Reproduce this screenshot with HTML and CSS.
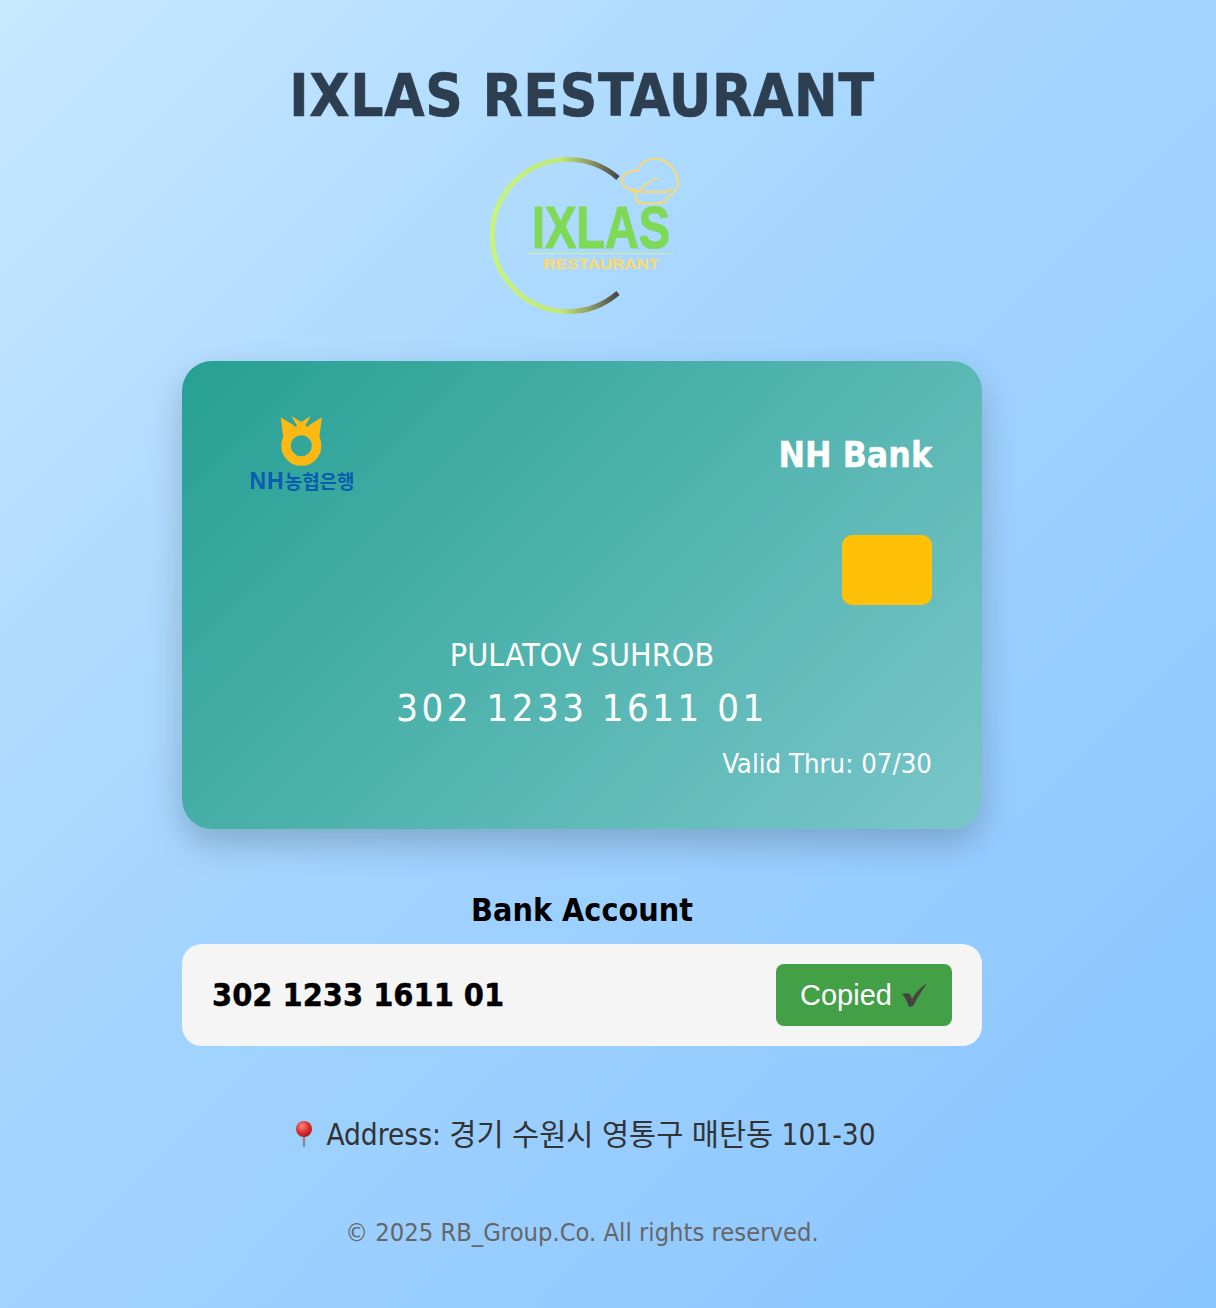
FILE: index.html
```html
<!DOCTYPE html>
<html lang="en">
<head>
    <meta charset="UTF-8">
    <title>IXLAS RESTAURANT</title>
    <link rel="stylesheet" href="styles.css">
</head>
<body>
<div class="page">
    <h1 class="title">IXLAS RESTAURANT</h1>
    <svg class="logo" width="224" height="170" viewBox="0 0 224 170">
        <defs>
            <linearGradient id="ring" gradientUnits="userSpaceOnUse" x1="4" y1="0" x2="130" y2="0">
                <stop offset="0" stop-color="#c6f47c"/>
                <stop offset="0.55" stop-color="#bfe878"/>
                <stop offset="0.78" stop-color="#8e9a62"/>
                <stop offset="1" stop-color="#454545"/>
            </linearGradient>
        </defs>
        <path d="M130 26 A76 76 0 1 0 130 141" fill="none" stroke="url(#ring)" stroke-width="5"/>
        <g fill="none" stroke="#ffd964" stroke-width="1.8" stroke-linejoin="round">
            <path d="M147 40 C136 36 132 30 134 27 C136 21 142 18 149 19 C152 10 162 6 168 7 C178 7 188 16 190 28 C191 35 187 41 182 43 L177 50 C168 52 158 52 149 50 Z"/>
            <path d="M144 36 C148 39 151 40 155 40 L178 40 C180 40 182 38 184 36"/>
            <path d="M152 38 C157 32 163 28 170 26"/>
        </g>
        <text class="logo-name" x="113" y="96" text-anchor="middle" textLength="138" lengthAdjust="spacingAndGlyphs">IXLAS</text>
        <rect x="39" y="101" width="146" height="1" fill="#d5ec9a"/>
        <text class="logo-sub" x="113" y="117" text-anchor="middle" textLength="116" lengthAdjust="spacingAndGlyphs">RESTAURANT</text>
    </svg>

    <div class="card">
        <div class="card-top">
            <div class="bank-logo">
                <svg width="46" height="50" viewBox="0 0 46 50">
                    <path d="M12.3 0 L22.3 6 L31.7 0 L22.3 17 Z" fill="#fdb913"/>
                    <path d="M1.7 1.3 L15 9.5 L18 18 L5 25.7 L3.3 14 Z M42.9 1.3 L29.6 9.5 L26.6 18 L39.6 25.7 L41.3 14 Z" fill="#fdb913"/>
                    <circle cx="22.3" cy="29.7" r="15.3" fill="none" stroke="#fdb913" stroke-width="9.5"/>
                </svg>
                <div class="bank-logo-text"><b>NH</b>농협은행</div>
            </div>
            <div class="bank-name">NH Bank</div>
        </div>
        <div class="chip"></div>
        <div class="holder">PULATOV SUHROB</div>
        <div class="number">302 1233 1611 01</div>
        <div class="valid">Valid Thru: 07/30</div>
    </div>

    <div class="account-label">Bank Account</div>
    <div class="account-box">
        <span class="account-no">302 1233 1611 01</span>
        <button class="copy-btn">Copied
            <svg class="check" width="26" height="24" viewBox="0 0 26 24">
                <path d="M0 11 C3 10 6 10 8 11 L10 16 C13 10 18 5 25 0 C20 8 15 15 11 23 L7 24 C5 18 3 14 0 11 Z" fill="#444"/>
            </svg>
        </button>
    </div>

    <p class="address">
        <svg class="pin" width="24" height="30" viewBox="0 0 24 30">
            <defs>
                <radialGradient id="pinHead" cx="0.38" cy="0.32" r="0.7">
                    <stop offset="0" stop-color="#ff8a80"/>
                    <stop offset="0.5" stop-color="#e53935"/>
                    <stop offset="1" stop-color="#a81818"/>
                </radialGradient>
            </defs>
            <rect x="10.8" y="14" width="2.4" height="13" rx="1" fill="#8d8d88"/>
            <circle cx="12" cy="9" r="8" fill="url(#pinHead)"/>
        </svg>
        Address: 경기 수원시 영통구 매탄동 101-30
    </p>
    <p class="footer">© 2025 RB_Group.Co. All rights reserved.</p>
</div>
</body>
</html>
```

FILE: styles.css
```css
html,
body {
    margin: 0;
    padding: 0;
    height: 100%;
}

body {
    background: linear-gradient(135deg, #c8e8ff 0%, #a6d6ff 40%, #88c4ff 100%);
    font-family: "DejaVu Sans Condensed", "DejaVu Sans", "Noto Sans CJK KR", sans-serif;
    overflow: hidden;
}

.page {
    width: 1164px;
    display: flex;
    flex-direction: column;
    align-items: center;
}

.title {
    margin: 63px 0 0;
    font-size: 58px;
    line-height: 66px;
    font-weight: 700;
    letter-spacing: 0.7px;
    -webkit-text-stroke: 0.6px #2c3e50;
    color: #2c3e50;
}

.logo {
    display: block;
    margin: 23px 0 0 36px;
}

.card {
    box-sizing: border-box;
    width: 800px;
    height: 468px;
    margin-top: 39px;
    padding: 50px 50px 0;
    border-radius: 30px;
    background: linear-gradient(135deg, #26a092, #7ac6ca);
    box-shadow: 0 15px 35px rgba(0, 0, 0, 0.2);
    color: #fff;
    display: flex;
    flex-direction: column;
}

.card-top {
    display: flex;
    justify-content: space-between;
    align-items: center;
}

.bank-logo {
    width: 130px;
    margin-left: 5px;
    margin-top: 5px;
    text-align: center;
}

.bank-logo svg {
    display: block;
    margin: 0 auto;
}

.bank-logo-text {
    font: 700 19px/30px "Liberation Sans", "Noto Sans CJK KR", sans-serif;
    color: #0a5cb0;
    white-space: nowrap;
    margin-left: -10px;
    margin-right: -10px;
}

.bank-logo-text b {
    font-size: 23px;
    letter-spacing: 1px;
}

.bank-name {
    font-size: 35.3px;
    font-weight: 700;
    -webkit-text-stroke: 0.4px #fff;
}

.chip {
    width: 90px;
    height: 70px;
    margin-top: 37px;
    border-radius: 10px;
    background: #ffc107;
    align-self: flex-end;
}

.holder {
    margin-top: 30px;
    font-size: 32px;
    line-height: 40px;
    text-align: center;
}

.number {
    margin-top: 10px;
    font-size: 38px;
    line-height: 46px;
    letter-spacing: 3.5px;
    text-align: center;
}

.valid {
    margin-top: 15px;
    font-size: 27.3px;
    line-height: 36px;
    text-align: right;
}

.account-label {
    margin-top: 61px;
    font-size: 32px;
    line-height: 40px;
    font-weight: 700;
    color: #000;
}

.account-box {
    box-sizing: border-box;
    width: 800px;
    height: 102px;
    margin-top: 14px;
    padding: 20px 30px;
    border-radius: 20px;
    background: #f5f5f5;
    display: flex;
    justify-content: space-between;
    align-items: center;
}

.account-no {
    font-size: 32.2px;
    font-weight: 700;
    -webkit-text-stroke: 0.4px #000;
    color: #000;
}

.copy-btn {
    width: 176px;
    height: 62px;
    padding: 0;
    border: none;
    border-radius: 8px;
    background: #43a047;
    color: #fff;
    font: 29px "Liberation Sans", sans-serif;
    display: flex;
    align-items: center;
    justify-content: center;
    gap: 10px;
}

.address {
    margin: 68px 0 0 4px;
    font-size: 29.5px;
    line-height: 42px;
    color: #333;
    display: flex;
    align-items: center;
    gap: 10px;
}

.footer {
    margin: 60px 0 0;
    font-size: 25.3px;
    line-height: 34px;
    color: #666;
}

.logo-name {
    font: 700 60px "Liberation Sans", sans-serif;
    fill: #7ed957;
    stroke: #7ed957;
    stroke-width: 1.2;
}

.logo-sub {
    font: 700 14.4px "Liberation Sans", sans-serif;
    fill: #ffd964;
}
```
